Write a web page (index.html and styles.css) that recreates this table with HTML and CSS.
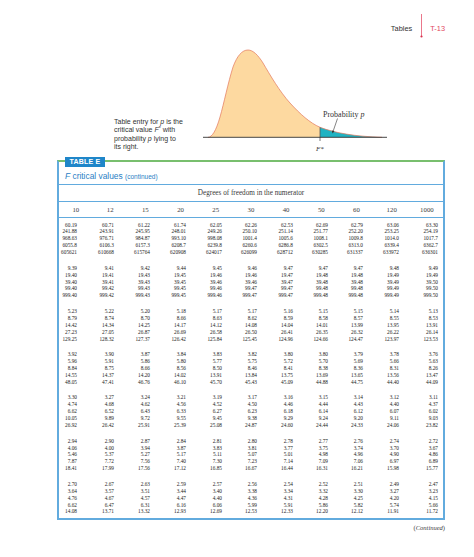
FILE: index.html
```html
<!DOCTYPE html>
<html>
<head>
<meta charset="utf-8">
<link rel="stylesheet" href="styles.css">
</head>
<body>
<div class="runhead">
  <span class="rh-title">Tables</span>
  <svg class="rh-div" viewBox="0 0 3 24"><line x1="1.5" y1="0" x2="1.5" y2="23" stroke="#e8687e" stroke-width="0.9"/><circle cx="1.5" cy="22.5" r="1.1" fill="#d9304c"/></svg>
  <span class="rh-page">T-13</span>
</div>

<div class="figure">
  <div class="caption">Table entry for <i>p</i> is the<br>critical value <i>F</i><sup>*</sup> with<br>probability <i>p</i> lying to<br>its right.</div>
  <svg class="curve" viewBox="0 0 192 108">
    <defs>
      <clipPath id="left"><rect x="0" y="0" width="120" height="108"/></clipPath>
      <clipPath id="right"><rect x="120" y="0" width="72" height="108"/></clipPath>
    </defs>
    <path clip-path="url(#left)" fill="#fdd9a0" d="M8,92.3 C12,92.2 16,86 20,72 C24,58 28,38 33,22 C37,11 42,5 48,5 C53,5 58,10 63,18 C70,30 80,47 90,58 C100,69 110,78 120,82.3 C135,88 155,91.5 182,92.3 L8,92.3 Z"/>
    <path clip-path="url(#right)" fill="#1fb3c3" d="M8,92.3 C12,92.2 16,86 20,72 C24,58 28,38 33,22 C37,11 42,5 48,5 C53,5 58,10 63,18 C70,30 80,47 90,58 C100,69 110,78 120,82.3 C135,88 155,91.5 182,92.3 L8,92.3 Z"/>
    <path fill="none" stroke="#e3775c" stroke-width="0.7" d="M8,92.3 C12,92.2 16,86 20,72 C24,58 28,38 33,22 C37,11 42,5 48,5 C53,5 58,10 63,18 C70,30 80,47 90,58 C100,69 110,78 120,82.3 C135,88 155,91.5 182,92.3"/>
    <line x1="120" y1="82.3" x2="120" y2="96" stroke="#555" stroke-width="0.8"/>
    <line x1="3" y1="92.3" x2="187" y2="92.3" stroke="#333" stroke-width="0.9"/>
    <line x1="137.5" y1="73.5" x2="133.2" y2="86" stroke="#333" stroke-width="0.6"/>
    <polygon points="132.6,88.5 131.8,85.4 134.4,86.1" fill="#333"/>
    <text x="123" y="71.5" class="svg-label">Probability <tspan font-style="italic">p</tspan></text>
    <text x="120" y="105.5" class="svg-label small" text-anchor="middle"><tspan font-style="italic">F</tspan>*</text>
  </svg>
</div>

<div class="table-wrap">
  <div class="tbl">
    <div class="tag">TABLE E</div>
    <div class="title"><i>F</i> critical values <small>(continued)</small></div>
    <div class="dof">Degrees of freedom in the numerator</div>
    <div class="hdr">
      <div>10</div><div>12</div><div>15</div><div>20</div><div>25</div><div>30</div><div>40</div><div>50</div><div>60</div><div>120</div><div>1000</div>
    </div>
    <div class="data">
      <div>60.19<br>241.88<br>968.63<br>6055.8<br>605621</div>
      <div>60.71<br>243.91<br>976.71<br>6106.3<br>610668</div>
      <div>61.22<br>245.95<br>984.87<br>6157.3<br>615764</div>
      <div>61.74<br>248.01<br>993.10<br>6208.7<br>620908</div>
      <div>62.05<br>249.26<br>998.08<br>6239.8<br>624017</div>
      <div>62.26<br>250.10<br>1001.4<br>6260.6<br>626099</div>
      <div>62.53<br>251.14<br>1005.6<br>6286.8<br>628712</div>
      <div>62.69<br>251.77<br>1008.1<br>6302.5<br>630285</div>
      <div>62.79<br>252.20<br>1009.8<br>6313.0<br>631337</div>
      <div>63.06<br>253.25<br>1014.0<br>6339.4<br>633972</div>
      <div>63.30<br>254.19<br>1017.7<br>6362.7<br>636301</div>

      <div>9.39<br>19.40<br>39.40<br>99.40<br>999.40</div>
      <div>9.41<br>19.41<br>39.41<br>99.42<br>999.42</div>
      <div>9.42<br>19.43<br>39.43<br>99.43<br>999.43</div>
      <div>9.44<br>19.45<br>39.45<br>99.45<br>999.45</div>
      <div>9.45<br>19.46<br>39.46<br>99.46<br>999.46</div>
      <div>9.46<br>19.46<br>39.46<br>99.47<br>999.47</div>
      <div>9.47<br>19.47<br>39.47<br>99.47<br>999.47</div>
      <div>9.47<br>19.48<br>39.48<br>99.48<br>999.48</div>
      <div>9.47<br>19.48<br>39.48<br>99.48<br>999.48</div>
      <div>9.48<br>19.49<br>39.49<br>99.49<br>999.49</div>
      <div>9.49<br>19.49<br>39.50<br>99.50<br>999.50</div>

      <div>5.23<br>8.79<br>14.42<br>27.23<br>129.25</div>
      <div>5.22<br>8.74<br>14.34<br>27.05<br>128.32</div>
      <div>5.20<br>8.70<br>14.25<br>26.87<br>127.37</div>
      <div>5.18<br>8.66<br>14.17<br>26.69<br>126.42</div>
      <div>5.17<br>8.63<br>14.12<br>26.58<br>125.84</div>
      <div>5.17<br>8.62<br>14.08<br>26.50<br>125.45</div>
      <div>5.16<br>8.59<br>14.04<br>26.41<br>124.96</div>
      <div>5.15<br>8.58<br>14.01<br>26.35<br>124.66</div>
      <div>5.15<br>8.57<br>13.99<br>26.32<br>124.47</div>
      <div>5.14<br>8.55<br>13.95<br>26.22<br>123.97</div>
      <div>5.13<br>8.53<br>13.91<br>26.14<br>123.53</div>

      <div>3.92<br>5.96<br>8.84<br>14.55<br>48.05</div>
      <div>3.90<br>5.91<br>8.75<br>14.37<br>47.41</div>
      <div>3.87<br>5.86<br>8.66<br>14.20<br>46.76</div>
      <div>3.84<br>5.80<br>8.56<br>14.02<br>46.10</div>
      <div>3.83<br>5.77<br>8.50<br>13.91<br>45.70</div>
      <div>3.82<br>5.75<br>8.46<br>13.84<br>45.43</div>
      <div>3.80<br>5.72<br>8.41<br>13.75<br>45.09</div>
      <div>3.80<br>5.70<br>8.38<br>13.69<br>44.88</div>
      <div>3.79<br>5.69<br>8.36<br>13.65<br>44.75</div>
      <div>3.78<br>5.66<br>8.31<br>13.56<br>44.40</div>
      <div>3.76<br>5.63<br>8.26<br>13.47<br>44.09</div>

      <div>3.30<br>4.74<br>6.62<br>10.05<br>26.92</div>
      <div>3.27<br>4.68<br>6.52<br>9.89<br>26.42</div>
      <div>3.24<br>4.62<br>6.43<br>9.72<br>25.91</div>
      <div>3.21<br>4.56<br>6.33<br>9.55<br>25.39</div>
      <div>3.19<br>4.52<br>6.27<br>9.45<br>25.08</div>
      <div>3.17<br>4.50<br>6.23<br>9.38<br>24.87</div>
      <div>3.16<br>4.46<br>6.18<br>9.29<br>24.60</div>
      <div>3.15<br>4.44<br>6.14<br>9.24<br>24.44</div>
      <div>3.14<br>4.43<br>6.12<br>9.20<br>24.33</div>
      <div>3.12<br>4.40<br>6.07<br>9.11<br>24.06</div>
      <div>3.11<br>4.37<br>6.02<br>9.03<br>23.82</div>

      <div>2.94<br>4.06<br>5.46<br>7.87<br>18.41</div>
      <div>2.90<br>4.00<br>5.37<br>7.72<br>17.99</div>
      <div>2.87<br>3.94<br>5.27<br>7.56<br>17.56</div>
      <div>2.84<br>3.87<br>5.17<br>7.40<br>17.12</div>
      <div>2.81<br>3.83<br>5.11<br>7.30<br>16.85</div>
      <div>2.80<br>3.81<br>5.07<br>7.23<br>16.67</div>
      <div>2.78<br>3.77<br>5.01<br>7.14<br>16.44</div>
      <div>2.77<br>3.75<br>4.98<br>7.09<br>16.31</div>
      <div>2.76<br>3.74<br>4.96<br>7.06<br>16.21</div>
      <div>2.74<br>3.70<br>4.90<br>6.97<br>15.98</div>
      <div>2.72<br>3.67<br>4.86<br>6.89<br>15.77</div>

      <div>2.70<br>3.64<br>4.76<br>6.62<br>14.08</div>
      <div>2.67<br>3.57<br>4.67<br>6.47<br>13.71</div>
      <div>2.63<br>3.51<br>4.57<br>6.31<br>13.32</div>
      <div>2.59<br>3.44<br>4.47<br>6.16<br>12.93</div>
      <div>2.57<br>3.40<br>4.40<br>6.06<br>12.69</div>
      <div>2.56<br>3.38<br>4.36<br>5.99<br>12.53</div>
      <div>2.54<br>3.34<br>4.31<br>5.91<br>12.33</div>
      <div>2.52<br>3.32<br>4.28<br>5.86<br>12.20</div>
      <div>2.51<br>3.30<br>4.25<br>5.82<br>12.12</div>
      <div>2.49<br>3.27<br>4.20<br>5.74<br>11.91</div>
      <div>2.47<br>3.23<br>4.15<br>5.66<br>11.72</div>
    </div>
  </div>
  <div class="cont">(<i>Continued</i>)</div>
</div>
</body>
</html>
```

FILE: styles.css
```css
body {
  margin: 0;
  width: 474px;
  background: #fff;
  color: #333;
  font-family: "Liberation Serif", serif;
}

.runhead {
  display: flex;
  justify-content: flex-end;
  align-items: flex-start;
  height: 24px;
  margin-top: 14px;
  padding-right: 29px;
}

.rh-title,
.rh-page {
  font-family: "Liberation Sans", sans-serif;
  font-size: 7.4px;
  line-height: 10px;
  margin-top: 10px;
  color: #333;
}

.rh-page {
  color: #e2455e;
}

.rh-div {
  width: 3px;
  height: 24px;
  margin: 0 7.5px 0 7.5px;
  display: block;
}

.figure {
  display: flex;
  align-items: flex-end;
  height: 108px;
  margin-top: 7px;
}

.caption {
  margin-left: 114px;
  width: 80px;
  margin-bottom: 1px;
  font-family: "Liberation Sans", sans-serif;
  font-size: 7px;
  line-height: 8.6px;
  color: #333;
}

.caption sup {
  font-size: 5px;
  line-height: 0;
  vertical-align: 2px;
}

.curve {
  display: block;
  width: 192px;
  height: 108px;
  margin-left: 6px;
}

.svg-label {
  font-family: "Liberation Serif", serif;
  font-size: 8px;
  fill: #333;
}

.svg-label.small {
  font-size: 7px;
}

.table-wrap {
  margin: 7px 0 0 57px;
  width: 388px;
}

.tbl {
  position: relative;
  border: 2px solid #62abde;
  border-top-color: #78bf6e;
}

.tag {
  position: absolute;
  top: -5px;
  left: 6px;
  height: 10px;
  padding: 0 4.5px;
  background: #1f86c9;
  color: #fff;
  font-family: "Liberation Sans", sans-serif;
  font-weight: bold;
  font-size: 7px;
  line-height: 10px;
  letter-spacing: 0.2px;
}

.title {
  height: 13px;
  padding: 9px 0 0 6px;
  border-bottom: 1px solid #62abde;
  font-family: "Liberation Sans", sans-serif;
  font-size: 8.4px;
  line-height: 10px;
  color: #2a80c4;
}

.title small {
  font-size: 6.5px;
}

.dof {
  height: 16px;
  line-height: 16px;
  text-align: center;
  font-size: 7.2px;
  color: #3a3a3a;
  border-bottom: 1px solid #62abde;
}

.hdr {
  display: grid;
  grid-template-columns: 33.6px repeat(10, 35.2px);
  height: 15px;
  line-height: 15px;
  font-size: 6.8px;
  color: #3a3a3a;
  text-align: center;
  border-bottom: 1px solid #62abde;
}

.data {
  display: grid;
  grid-template-columns: 18px 37px 36px 36px 36px 35px 36px 35px 35px 36px 39px;
  row-gap: 8.7px;
  padding: 3.55px 0 2.75px;
  font-size: 5.3px;
  line-height: 6.9px;
  text-align: right;
  color: #222;
  white-space: nowrap;
}

.cont {
  margin-top: 4px;
  text-align: right;
  font-size: 6.5px;
  line-height: 8px;
  color: #3a3a3a;
}
```
